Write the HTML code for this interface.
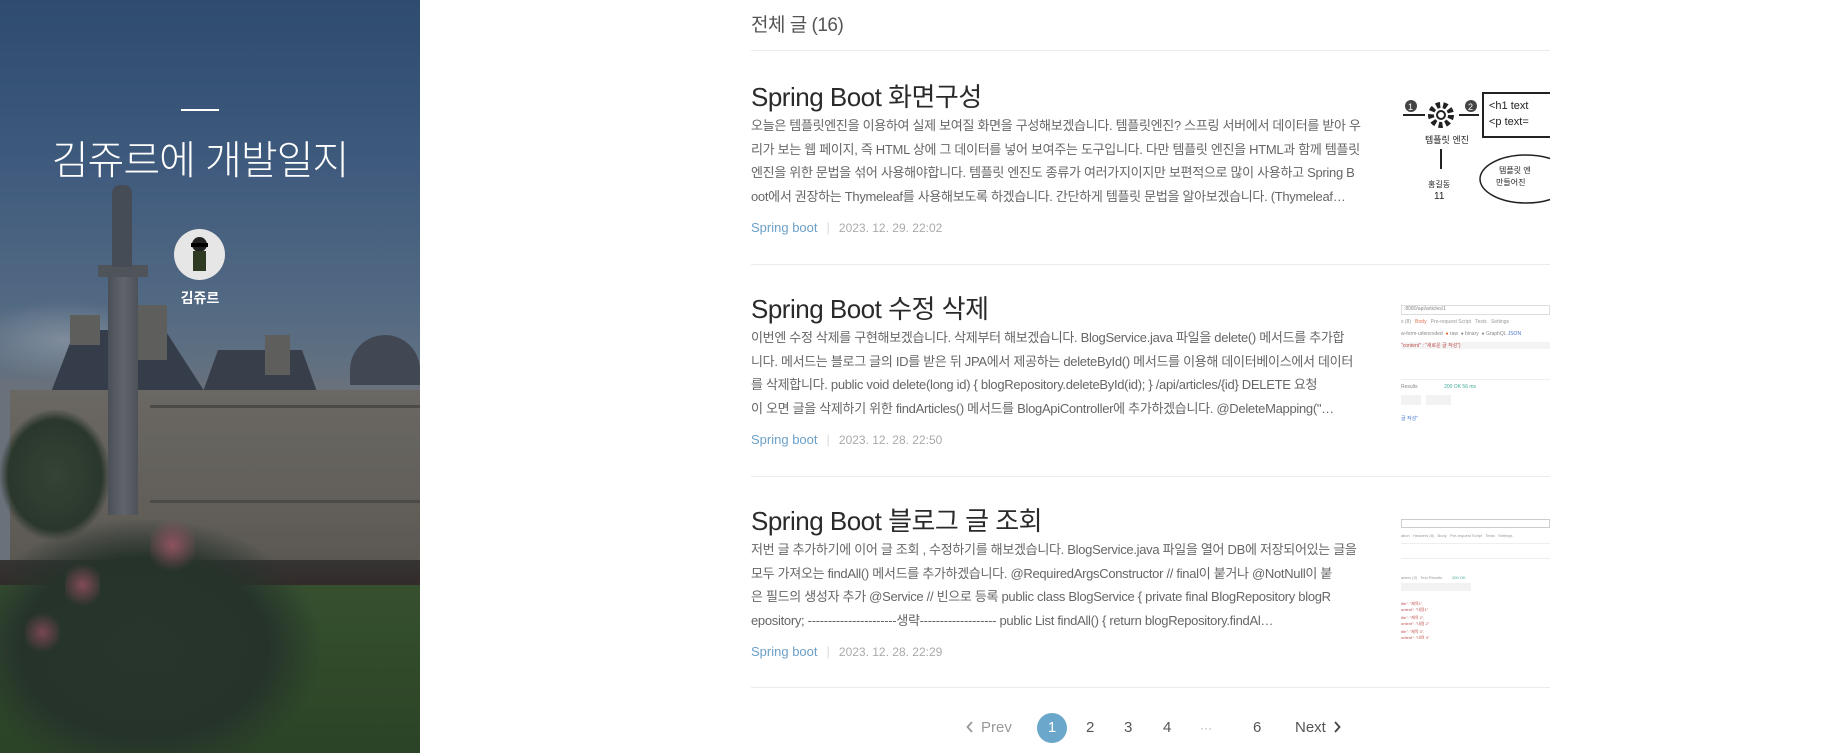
<!DOCTYPE html>
<html><head><meta charset="utf-8">
<style>
*{margin:0;padding:0;box-sizing:border-box}
body{width:1822px;height:753px;overflow:hidden;background:#fff;font-family:"Liberation Sans","Noto Sans CJK KR",sans-serif;position:relative}
#side{position:absolute;left:0;top:0;width:420px;height:753px;overflow:hidden;background:linear-gradient(180deg,#34557a 0%,#44648a 20%,#5d7792 40%,#6d7f90 48%,#7a8088 52%)}
#side div{position:absolute}
.k{font-family:"Liberation Sans","Noto Sans CJK KR",sans-serif}
#main{position:absolute;left:751px;top:0;width:799px}
.hd{position:absolute;left:0;top:10px;font-size:19px;color:#555;letter-spacing:-0.5px}
.hr{position:absolute;left:0;width:799px;height:1px;background:#ebebeb}
.post{position:absolute;left:0;width:799px;height:200px}
.t{position:absolute;left:0;top:0;font-size:26px;color:#2a2a2a;white-space:nowrap;letter-spacing:-0.5px}
.ex{position:absolute;left:0;top:37px;width:630px;font-size:13px;line-height:23.7px;color:#666;white-space:nowrap;letter-spacing:-0.3px}
.ex div{overflow:hidden;width:625px}
.m{position:absolute;left:0;top:143px;font-size:13px;white-space:nowrap}
.m .c{color:#6ba0c8}.m .s{color:#ddd;margin:0 9px}.m .d{color:#aaa;font-size:12px}
.th{position:absolute;left:650px;top:8px;width:149px;height:130px;overflow:hidden}
.pg{position:absolute;top:713px;font-size:15px;color:#555;height:30px;line-height:30px}
</style></head><body>
<div id="side">
 <div style="left:0;top:300px;width:160px;height:80px;background:radial-gradient(ellipse at 40% 50%,rgba(180,190,200,.55),rgba(180,190,200,0) 70%)"></div>
 <div style="left:30px;top:330px;width:180px;height:70px;background:#3d444f;clip-path:polygon(10% 100%,25% 0,75% 0,100% 100%)"></div>
 <div style="left:200px;top:350px;width:120px;height:50px;background:#3f4650;clip-path:polygon(0 100%,15% 0,85% 0,100% 100%)"></div>
 <div style="left:350px;top:335px;width:70px;height:50px;background:#4a505a;border-radius:35px 35px 0 0"></div>
 <div style="left:70px;top:315px;width:30px;height:30px;background:#6b6a66"></div>
 <div style="left:137px;top:305px;width:30px;height:55px;background:#6b6a66"></div>
 <div style="left:265px;top:335px;width:25px;height:40px;background:#6b6a66"></div>
 <div style="left:10px;top:390px;width:410px;height:210px;background:linear-gradient(180deg,#7a766d,#6f6a60 60%,#615c53)"></div>
 <div style="left:150px;top:405px;width:270px;height:3px;background:#58544c"></div>
 <div style="left:150px;top:500px;width:270px;height:3px;background:#58544c"></div>
 <div style="left:0;top:410px;width:110px;height:130px;background:radial-gradient(ellipse at 50% 50%,#3b4a36,#2f3d2c 60%,rgba(47,61,44,0) 72%)"></div>
 <div style="left:108px;top:265px;width:30px;height:250px;background:linear-gradient(90deg,#54585e,#6f7276,#585b60)"></div>
 <div style="left:98px;top:265px;width:50px;height:12px;background:#5a5d62"></div>
 <div style="left:112px;top:185px;width:20px;height:82px;background:#4f555d;border-radius:8px 8px 2px 2px"></div>
 <div style="left:0;top:560px;width:420px;height:30px;background:linear-gradient(180deg,#3b3a34,#3a2b28)"></div>
 <div style="left:0;top:585px;width:420px;height:168px;background:linear-gradient(180deg,#3c5a30,#355228 60%,#2f4a25)"></div>
 <div style="left:0;top:520px;width:320px;height:233px;background:radial-gradient(ellipse at 45% 55%,#2c3a2c,#2a382b 50%,rgba(42,56,43,0) 72%)"></div>
 <div style="left:150px;top:515px;width:45px;height:60px;background:radial-gradient(circle,#a35c66,rgba(163,92,102,0) 70%)"></div>
 <div style="left:65px;top:560px;width:35px;height:50px;background:radial-gradient(circle,#95545d,rgba(149,84,93,0) 70%)"></div>
 <div style="left:25px;top:610px;width:35px;height:45px;background:radial-gradient(circle,#8a4e58,rgba(138,78,88,0) 70%)"></div>
 <div style="left:0;top:0;width:420px;height:753px;background:rgba(20,30,45,.15)"></div>
 <div style="left:181px;top:109px;width:38px;height:2px;background:#fff"></div>
 <div class="k" style="left:0;top:128px;width:400px;text-align:center;font-size:40px;color:#fff;font-weight:300;letter-spacing:-1px">김쥬르에 개발일지</div>
 <div style="left:174px;top:229px;width:51px;height:51px;border-radius:50%;background:#e6e6e6;overflow:hidden">
   <div style="left:18px;top:8px;width:15px;height:15px;border-radius:50%;background:#222"></div>
   <div style="left:17px;top:14px;width:17px;height:4px;background:#000"></div>
   <div style="left:19px;top:22px;width:13px;height:20px;background:#2f3a22"></div>
 </div>
 <div class="k" style="left:0;top:288px;width:400px;text-align:center;font-size:14px;color:#fff;font-weight:bold">김쥬르</div>
</div>

<div id="main">
 <div class="hd">전체 글 (16)</div>
 <div class="hr" style="top:50px"></div>

 <div class="post" style="top:77px">
  <div class="t">Spring Boot 화면구성</div>
  <div class="ex">
   <div>오늘은 템플릿엔진을 이용하여 실제 보여질 화면을 구성해보겠습니다. 템플릿엔진? 스프링 서버에서 데이터를 받아 우</div>
   <div>리가 보는 웹 페이지, 즉 HTML 상에 그 데이터를 넣어 보여주는 도구입니다. 다만 템플릿 엔진을 HTML과 함께 템플릿</div>
   <div>엔진을 위한 문법을 섞어 사용해야합니다. 템플릿 엔진도 종류가 여러가지이지만 보편적으로 많이 사용하고 Spring B</div>
   <div>oot에서 권장하는 Thymeleaf를 사용해보도록 하겠습니다. 간단하게 템플릿 문법을 알아보겠습니다. (Thymeleaf…</div>
  </div>
  <div class="m"><span class="c">Spring boot</span><span class="s">|</span><span class="d">2023. 12. 29. 22:02</span></div>
  <div class="th">
   <svg width="149" height="130" viewBox="0 0 149 130" font-family="Liberation Sans" >
    <circle cx="10" cy="21" r="6" fill="#444"/><text x="7" y="25" font-size="9" fill="#fff">1</text>
    <path d="M2 30 H24" stroke="#222" stroke-width="2"/>
    <circle cx="40" cy="30" r="10" fill="none" stroke="#222" stroke-width="6" stroke-dasharray="4 3"/>
    <circle cx="40" cy="30" r="4" fill="#fff" stroke="#222" stroke-width="2"/>
    <circle cx="70" cy="21" r="6" fill="#444"/><text x="67" y="25" font-size="9" fill="#fff">2</text>
    <path d="M58 30 H78" stroke="#222" stroke-width="2"/>
    <rect x="82" y="8" width="70" height="44" fill="none" stroke="#222" stroke-width="2"/>
    <text x="88" y="24" font-size="11" fill="#222">&lt;h1 text</text>
    <text x="88" y="40" font-size="11" fill="#222">&lt;p text=</text>
    <text x="24" y="58" font-size="9" fill="#222">템플릿 엔진</text>
    <path d="M40 64 V84" stroke="#222" stroke-width="2"/>
    <text x="27" y="102" font-size="8" fill="#222">홍길동</text>
    <text x="33" y="114" font-size="10" fill="#222">11</text>
    <ellipse cx="125" cy="94" rx="46" ry="24" fill="none" stroke="#222" stroke-width="1.5"/>
    <text x="98" y="88" font-size="8" fill="#222">템플릿 엔</text>
    <text x="95" y="100" font-size="8" fill="#222">만들어진</text>
   </svg>
  </div>
 </div>
 <div class="hr" style="top:264px"></div>

 <div class="post" style="top:289px">
  <div class="t">Spring Boot 수정 삭제</div>
  <div class="ex">
   <div>이번엔 수정 삭제를 구현해보겠습니다. 삭제부터 해보겠습니다. BlogService.java 파일을 delete() 메서드를 추가합</div>
   <div>니다. 메서드는 블로그 글의 ID를 받은 뒤 JPA에서 제공하는 deleteById() 메서드를 이용해 데이터베이스에서 데이터</div>
   <div>를 삭제합니다. public void delete(long id) { blogRepository.deleteById(id); } /api/articles/{id} DELETE 요청</div>
   <div>이 오면 글을 삭제하기 위한 findArticles() 메서드를 BlogApiController에 추가하겠습니다. @DeleteMapping("…</div>
  </div>
  <div class="m"><span class="c">Spring boot</span><span class="s">|</span><span class="d">2023. 12. 28. 22:50</span></div>
  <div class="th" style="font-size:5px;color:#888">
   <div style="position:absolute;left:0;top:8px;width:149px;height:10px;border:1px solid #ddd;padding-left:2px">:8080/api/articles/1</div>
   <div style="position:absolute;left:0;top:22px;color:#999">s (8) &nbsp; <span style="color:#e07050">Body</span> &nbsp; Pre-request Script &nbsp; Tests &nbsp; Settings</div>
   <div style="position:absolute;left:0;top:34px">w-form-urlencoded &nbsp;<span style="color:#e06030">●</span> raw &nbsp;● binary &nbsp;● GraphQL <span style="color:#4a7ad0">JSON</span></div>
   <div style="position:absolute;left:0;top:45px;width:149px;height:7px;background:#f4f4f4;color:#c05050">"content" : "새로운 글 작성"}</div>
   <div style="position:absolute;left:0;top:82px;width:149px;border-top:1px solid #eee;padding-top:4px">Results &nbsp; &nbsp; &nbsp; &nbsp; &nbsp; &nbsp; &nbsp; &nbsp; &nbsp; <span style="color:#4a9">200 OK 56 ms</span></div>
   <div style="position:absolute;left:0;top:98px;width:20px;height:10px;background:#f2f2f2"></div>
   <div style="position:absolute;left:25px;top:98px;width:25px;height:10px;background:#f2f2f2"></div>
   <div style="position:absolute;left:0;top:118px;color:#4a7ad0">글 작성"</div>
  </div>
 </div>
 <div class="hr" style="top:476px"></div>

 <div class="post" style="top:501px">
  <div class="t">Spring Boot 블로그 글 조회</div>
  <div class="ex">
   <div>저번 글 추가하기에 이어 글 조회 , 수정하기를 해보겠습니다. BlogService.java 파일을 열어 DB에 저장되어있는 글을</div>
   <div>모두 가져오는 findAll() 메서드를 추가하겠습니다. @RequiredArgsConstructor // final이 붙거나 @NotNull이 붙</div>
   <div>은 필드의 생성자 추가 @Service // 빈으로 등록 public class BlogService { private final BlogRepository blogR</div>
   <div>epository; ----------------------생략------------------- public List findAll() { return blogRepository.findAl…</div>
  </div>
  <div class="m"><span class="c">Spring boot</span><span class="s">|</span><span class="d">2023. 12. 28. 22:29</span></div>
  <div class="th" style="font-size:4px;color:#999">
   <div style="position:absolute;left:0;top:10px;width:149px;height:9px;border:1px solid #ccc"></div>
   <div style="position:absolute;left:0;top:24px">ation &nbsp; Headers (8) &nbsp; Body &nbsp; Pre-request Script &nbsp; Tests &nbsp; Settings</div>
   <div style="position:absolute;left:0;top:34px;width:149px;height:16px;border-top:1px solid #eee;border-bottom:1px solid #eee"></div>
   <div style="position:absolute;left:0;top:66px">aders (3) &nbsp; Test Results &nbsp; &nbsp; &nbsp; &nbsp; <span style="color:#4a9">200 OK</span></div>
   <div style="position:absolute;left:0;top:74px;width:70px;height:8px;background:#f2f2f2"></div>
   <div style="position:absolute;left:0;top:92px;color:#c05050">itle": "제목1",<br>ontent": "내용1"</div>
   <div style="position:absolute;left:0;top:106px;color:#c05050">itle": "제목 2",<br>ontent": "내용 2"</div>
   <div style="position:absolute;left:0;top:120px;color:#c05050">itle": "제목 3",<br>ontent": "내용 3"</div>
  </div>
 </div>
 <div class="hr" style="top:687px"></div>
</div>

<div class="pg" style="left:966px;color:#999"><svg width="8" height="12" viewBox="0 0 8 12" style="vertical-align:-1px;margin-right:7px"><path d="M6 1 L1.5 6 L6 11" fill="none" stroke="#999" stroke-width="1.8"/></svg>Prev</div>
<div class="pg" style="left:1037px;width:30px;border-radius:50%;background:#6ba6cb;color:#fff;text-align:center">1</div>
<div class="pg" style="left:1086px">2</div>
<div class="pg" style="left:1124px">3</div>
<div class="pg" style="left:1163px">4</div>
<div class="pg" style="left:1200px;color:#aaa;font-size:12px">···</div>
<div class="pg" style="left:1253px">6</div>
<div class="pg" style="left:1295px">Next<svg width="8" height="12" viewBox="0 0 8 12" style="vertical-align:-1px;margin-left:7px"><path d="M2 1 L6.5 6 L2 11" fill="none" stroke="#444" stroke-width="1.8"/></svg></div>
</body></html>
